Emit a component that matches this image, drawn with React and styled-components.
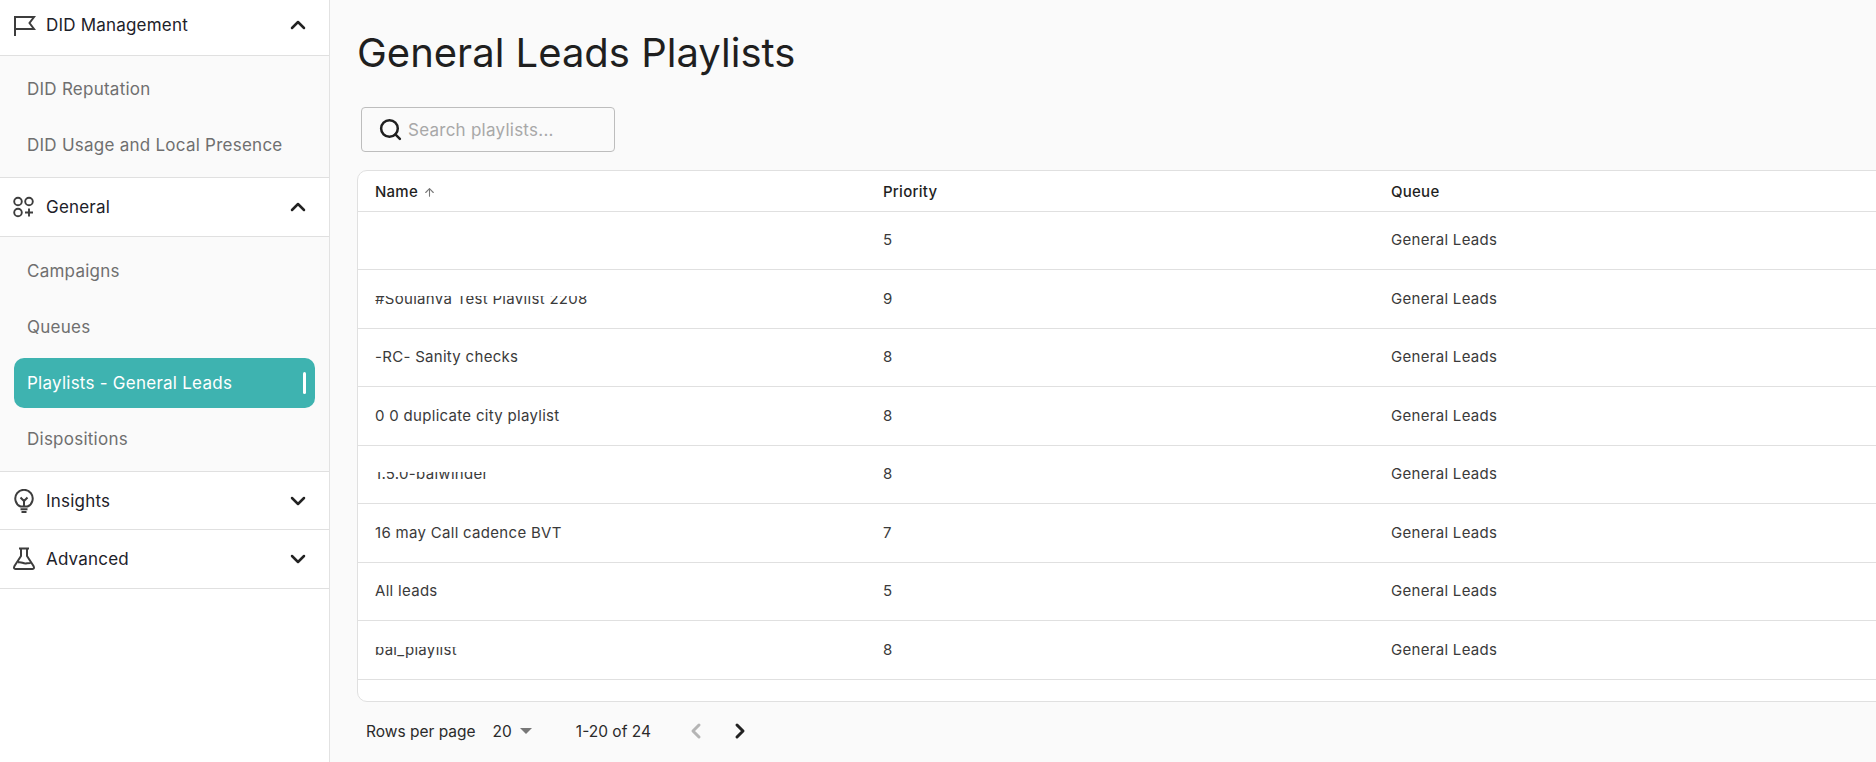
import React from 'react'
import styled, { createGlobalStyle } from 'styled-components'
import { ChevronUp, ChevronDown, ChevronLeft, ChevronRight, Search, ArrowUp } from 'lucide-react'

const GlobalStyle = createGlobalStyle`
    html, body { margin: 0; padding: 0; height: 100%; overflow: hidden; }
    body { font-family: "Inter", "Liberation Sans", sans-serif; background: #fafafa; color: #1f1f1f; }
    #root { height: 100%; }
`

const Page = styled.div`
    display: flex;
    height: 762px;
    overflow: hidden;
`

const Sidebar = styled.nav`
    width: 329px;
    flex-shrink: 0;
    background: #fff;
    border-right: 1px solid #e2e2e2;
`

const SectionHead = styled.div`
    display: flex;
    align-items: center;
    height: ${p => p.h}px;
    padding: 0 19px ${p => p.lift || 0}px 12px;
    border-bottom: 1px solid #e0e0e0;
    box-sizing: border-box;
    font-size: 17px;
    letter-spacing: 0.2px;
    color: #1d2129;
`

const IconBox = styled.span`
    display: flex;
    width: 24px;
    height: 24px;
    margin-right: 10px;
    color: #3d3d3d;
`

const HeadLabel = styled.span`
    flex: 1;
`

const HeadChevron = styled.span`
    display: flex;
    color: #222;
`

const SubList = styled.div`
    display: flex;
    flex-direction: column;
    gap: 6px;
    background: #fafafa;
    border-bottom: 1px solid #e0e0e0;
    padding: ${p => p.pad};
`

const SubItem = styled.div`
    display: flex;
    align-items: center;
    justify-content: space-between;
    height: 50px;
    margin: 0 14px;
    padding: 0 9px 0 13px;
    border-radius: 10px;
    font-size: 17px;
    letter-spacing: 0.25px;
    background: ${p => p.active ? '#3eb3b0' : 'transparent'};
    color: ${p => p.active ? '#fff' : '#6f6f6f'};
`

const ActiveMark = styled.span`
    width: 3px;
    height: 22px;
    border-radius: 2px;
    background: #fff;
`

const Main = styled.main`
    flex: 1;
    min-width: 0;
    padding: 0 0 0 27px;
    background: #fafafa;
`

const Title = styled.h1`
    margin: 0;
    padding-top: 27px;
    height: 80px;
    box-sizing: border-box;
    font-size: 40px;
    line-height: 52px;
    font-weight: 400;
    color: #1f1f1f;
`

const SearchBox = styled.div`
    display: flex;
    align-items: center;
    width: 254px;
    height: 45px;
    margin: 27px 0 18px 4px;
    padding-left: 16px;
    box-sizing: border-box;
    border: 1px solid #bdbdbd;
    border-radius: 4px;
    font-size: 17px;
    letter-spacing: 0.25px;
    color: #a8a8a8;
`

const SearchIcon = styled(Search)`
    margin-right: 5px;
    color: #1f1f1f;
`

const TableCard = styled.div`
    height: 532px;
    margin-right: -12px;
    box-sizing: border-box;
    overflow: hidden;
    background: #fff;
    border: 1px solid #e0e0e0;
    border-radius: 10px;
`

const Row = styled.div`
    display: grid;
    grid-template-columns: 508px 508px 1fr;
    align-items: center;
    height: ${p => p.header ? 40.5 : 58.5}px;
    box-sizing: border-box;
    padding: ${p => p.header ? '2px 0 0 17px' : '0 0 0 17px'};
    border-bottom: 1px solid #e0e0e0;
    font-size: 15px;
    line-height: 18px;
    letter-spacing: ${p => p.header ? 0.25 : 0.3}px;
    font-weight: ${p => p.header ? 500 : 400};
    color: ${p => p.header ? '#1f1f1f' : '#3a3a3a'};
`

const SortArrow = styled(ArrowUp)`
    margin-left: 5px;
    vertical-align: -2px;
    color: #777;
`

/* the source screenshot has its test data partly painted out */
const Blanked = styled.span`
    position: relative;
    display: inline-block;
    &::before, &::after {
        content: '';
        position: absolute;
        left: -2px;
        right: -2px;
        background: #fff;
    }
    &::before {
        top: 0;
        height: ${p => p.top}px;
    }
    &::after {
        bottom: 0;
        height: ${p => p.bottom}px;
    }
`

const Pager = styled.div`
    display: flex;
    align-items: center;
    height: 58px;
    padding-left: 9px;
    font-size: 15.500px;
    color: #2a2a2a;
`

const PageSize = styled.span`
    display: flex;
    align-items: center;
    margin: 0 44px 0 17px;
`

const Caret = styled.span`
    width: 0;
    height: 0;
    margin-left: 8px;
    border-left: 6px solid transparent;
    border-right: 6px solid transparent;
    border-top: 6px solid #777;
`

const PagerNav = styled.span`
    display: flex;
    gap: 20px;
    margin-left: 33px;
`

const rows = [
    { name: '', priority: 5 },
    { name: '#Soujanya Test Playlist 2208', priority: 9, blank: [6, 4] },
    { name: '-RC- Sanity checks', priority: 8 },
    { name: '0 0 duplicate city playlist', priority: 8 },
    { name: '1.5.0-balwinder', priority: 8, blank: [7, 3] },
    { name: '16 may Call cadence BVT', priority: 7 },
    { name: 'All leads', priority: 5 },
    { name: 'bal_playlist', priority: 8, blank: [6, 0] },
]

const NameCell = ({ name, blank }) => {
    if (!blank) return <span>{name}</span>
    return <span><Blanked top={blank[0]} bottom={blank[1]}>{name}</Blanked></span>
}

const FlagIcon = () => <svg width="24" height="24" viewBox="0 0 24 24" fill="none" stroke="currentColor" strokeWidth="2"><path d="M3 23V4h19l-4.500 6 4.500 6H3" /></svg>
const AppsIcon = () => <svg width="24" height="24" viewBox="0 0 24 24" fill="none" stroke="currentColor" strokeWidth="1.900"><circle cx="6" cy="6.500" r="3.800" /><circle cx="17" cy="6.500" r="3.800" /><circle cx="6" cy="17.500" r="3.800" /><path d="M17 13.500v8M13 17.500h8" /></svg>
const BulbIcon = () => <svg width="24" height="24" viewBox="0 0 24 24" fill="none" stroke="currentColor" strokeWidth="2"><path d="M8.500 17.500A8.700 8.700 0 1 1 15.500 17.500ZM12 17.500V12M8.500 8.500L12 12l3.500-3.500M8.500 20.300h7M9.500 23h5" /></svg>
const FlaskIcon = () => <svg width="24" height="24" viewBox="0 0 24 24" fill="none" stroke="currentColor" strokeWidth="2"><path d="M7 1.500h10M9 1.500V9L2.500 19c-1 2-.5 3 1 3h17c1.500 0 2-1 1-3L15 9V1.500M6 15.500c3-1.500 5 1.500 8 1 2-.3 3-.5 4.500-.5" /></svg>

const Chevron = ({ open }) => <HeadChevron>
    {open ? <ChevronUp size={24} strokeWidth={2.500} /> : <ChevronDown size={24} strokeWidth={2.500} />}
</HeadChevron>

export default () => <Page>
    <GlobalStyle />
    <Sidebar>
        <SectionHead h={56} lift={6}><IconBox><FlagIcon /></IconBox><HeadLabel>DID Management</HeadLabel><Chevron open /></SectionHead>
        <SubList pad="8px 0 7px">
            <SubItem>DID Reputation</SubItem>
            <SubItem>DID Usage and Local Presence</SubItem>
        </SubList>
        <SectionHead h={59}><IconBox><AppsIcon /></IconBox><HeadLabel>General</HeadLabel><Chevron open /></SectionHead>
        <SubList pad="9px 0 7px">
            <SubItem>Campaigns</SubItem>
            <SubItem>Queues</SubItem>
            <SubItem active>Playlists - General Leads<ActiveMark /></SubItem>
            <SubItem>Dispositions</SubItem>
        </SubList>
        <SectionHead h={58}><IconBox><BulbIcon /></IconBox><HeadLabel>Insights</HeadLabel><Chevron /></SectionHead>
        <SectionHead h={59}><IconBox><FlaskIcon /></IconBox><HeadLabel>Advanced</HeadLabel><Chevron /></SectionHead>
    </Sidebar>
    <Main>
        <Title>General Leads Playlists</Title>
        <SearchBox><SearchIcon size={25} strokeWidth={2.400} />Search playlists...</SearchBox>
        <TableCard>
            <Row header>
                <span>Name<SortArrow size={13} /></span>
                <span>Priority</span>
                <span>Queue</span>
            </Row>
            {rows.map((row, idx) => <Row key={idx}>
                <NameCell name={row.name} blank={row.blank} />
                <span>{row.priority}</span>
                <span>General Leads</span>
            </Row>)}
        </TableCard>
        <Pager>
            Rows per page
            <PageSize>20<Caret /></PageSize>
            1-20 of 24
            <PagerNav>
                <ChevronLeft size={24} strokeWidth={3} color="#b5b5b5" />
                <ChevronRight size={24} strokeWidth={3} color="#222" />
            </PagerNav>
        </Pager>
    </Main>
</Page>
